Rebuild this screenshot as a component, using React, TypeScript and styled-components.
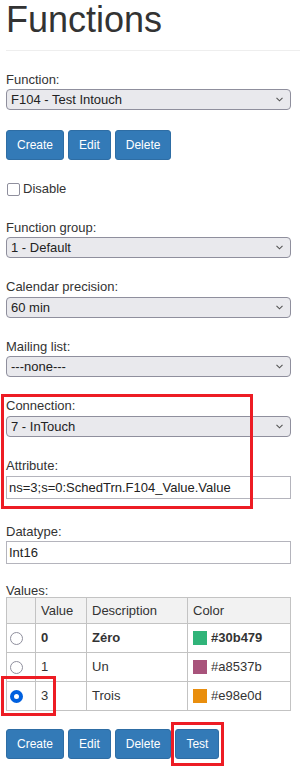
import React from 'react'
import styled, { createGlobalStyle } from 'styled-components'

const GlobalStyle = createGlobalStyle`
  html, body {
    margin: 0;
    padding: 0;
    background: #fff;
  }
  body {
    font-family: 'Liberation Sans', Arial, Helvetica, sans-serif;
    font-size: 13px;
    line-height: 1.42857;
    color: #333;
  }
`

const Page = styled.div`
  position: relative;
  width: 300px;
  box-sizing: border-box;
  padding: 0 9px 0 6px;
`
const PageHeader = styled.div`
  margin: 0 -9px 20px 0;
  padding-bottom: 10px;
  border-bottom: 1px solid #eee;
`
const Title = styled.h1`
  margin: 0;
  font-size: 36px;
  font-weight: normal;
  line-height: 1.1;
  color: #333;
`
const FormGroup = styled.div`
  margin-bottom: 20px;
`
const Label = styled.label`
  display: block;
  font-weight: normal;
`
const ValuesLabel = styled.label`
  display: block;
  margin-top: 3px;
  line-height: 13px;
`
const SelectWrap = styled.div`
  position: relative;
`
const Select = styled.select`
  display: block;
  width: 100%;
  height: 21px;
  box-sizing: border-box;
  appearance: none;
  margin: 0;
  padding: 1px 20px 1px 4px;
  font-family: inherit;
  font-size: 13px;
  color: #222;
  background: #e9e9ed;
  border: 1px solid #8f8f9d;
  border-radius: 4px;
`
const Chevron = styled.svg`
  position: absolute;
  right: 8px;
  top: 8px;
  width: 7px;
  height: 5px;
  pointer-events: none;
`
const TextInput = styled.input`
  display: block;
  width: 100%;
  height: 23px;
  box-sizing: border-box;
  margin: 0;
  padding: 2px 2px;
  font-family: inherit;
  font-size: 13px;
  color: #222;
  background: #fff;
  border: 1px solid #b4b4bc;
  border-radius: 0;
`
const ButtonRow = styled.div`
  display: flex;
  gap: 4px;
  margin-bottom: 20px;
`
const Button = styled.button<{ $marked?: boolean }>`
  position: relative;
  height: 30px;
  padding: 5px 10px;
  font-family: inherit;
  font-size: 12px;
  line-height: 1.5;
  color: #fff;
  background: #337ab7;
  border: 1px solid #2e6da4;
  border-radius: 3px;
  cursor: pointer;

  ${({ $marked }) =>
    $marked &&
    `
    &::after {
      content: '';
      position: absolute;
      top: -8px;
      bottom: -8px;
      left: -5px;
      right: -6px;
      border: 3px solid #ed1c24;
    }
  `}
`
const CheckRow = styled.label`
  display: flex;
  align-items: center;
  gap: 3px;
  margin-bottom: 20px;
`
const CheckBox = styled.span`
  width: 13px;
  height: 13px;
  box-sizing: border-box;
  margin-left: 1px;
  border: 1px solid #8f8f9d;
  border-radius: 2px;
  background: #fff;
`
const Highlight = styled.div`
  position: relative;
  margin-bottom: 24px;

  & > ${FormGroup}:last-child {
    margin-bottom: 0;
  }

  &::after {
    content: '';
    position: absolute;
    top: -3px;
    left: -5px;
    width: 246px;
    bottom: -10px;
    border: 3px solid #ed1c24;
    pointer-events: none;
  }
`
const Table = styled.table`
  width: 100%;
  border-collapse: collapse;
  margin-bottom: 18px;

  th,
  td {
    padding: 5px;
    line-height: 18px;
    border: 1px solid #c3c3c3;
    text-align: left;
    font-weight: normal;
    vertical-align: middle;
  }
  th {
    line-height: 15px;
    background: #f2f2f2;
  }
`
const RadioCell = styled.td<{ $marked?: boolean }>`
  position: relative;

  ${({ $marked }) =>
    $marked &&
    `
    &::after {
      content: '';
      position: absolute;
      top: -6px;
      left: -6px;
      width: 49px;
      height: 34px;
      border: 3px solid #ed1c24;
      z-index: 1;
    }
  `}
`
const Radio = styled.span<{ $checked?: boolean }>`
  display: block;
  width: 13px;
  height: 13px;
  box-sizing: border-box;
  margin-left: -2px;
  border-radius: 50%;
  background: #fff;
  border: ${({ $checked }) => ($checked ? '4px solid #0060df' : '1px solid #8f8f9d')};
`
const Cell = styled.td<{ $bold?: boolean }>`
  font-weight: ${({ $bold }) => ($bold ? 'bold' : 'normal')} !important;
`
const ColorCell = styled.span`
  display: flex;
  align-items: center;
  gap: 4px;
`
const Swatch = styled.span<{ $color: string }>`
  width: 14px;
  height: 14px;
  background: ${({ $color }) => $color};
`

const SelectField = ({ label, value }: { label: string; value: string }) => (
  <FormGroup>
    <Label>{label}</Label>
    <SelectWrap>
      <Select defaultValue={value}>
        <option>{value}</option>
      </Select>
      <Chevron viewBox="0 0 7 5">
        <path d="M0.5 0.8 L3.5 3.8 L6.5 0.8" fill="none" stroke="#555" strokeWidth="1.1" />
      </Chevron>
    </SelectWrap>
  </FormGroup>
)

const InputField = ({ label, value }: { label: string; value: string }) => (
  <FormGroup>
    <Label>{label}</Label>
    <TextInput defaultValue={value} />
  </FormGroup>
)

const values = [
  { radio: false, value: '0', desc: 'Zéro', color: '#30b479', bold: true },
  { radio: false, value: '1', desc: 'Un', color: '#a8537b', bold: false },
  { radio: true, value: '3', desc: 'Trois', color: '#e98e0d', bold: false },
]

const App = (): JSX.Element => (
  <>
    <GlobalStyle />
    <Page>
      <PageHeader>
        <Title>Functions</Title>
      </PageHeader>

      <SelectField label="Function:" value="F104 - Test Intouch" />

      <ButtonRow>
        <Button>Create</Button>
        <Button>Edit</Button>
        <Button>Delete</Button>
      </ButtonRow>

      <CheckRow>
        <CheckBox />
        Disable
      </CheckRow>

      <SelectField label="Function group:" value="1 - Default" />
      <SelectField label="Calendar precision:" value="60 min" />
      <SelectField label="Mailing list:" value="---none---" />

      <Highlight>
        <SelectField label="Connection:" value="7 - InTouch" />
        <InputField label="Attribute:" value="ns=3;s=0:SchedTrn.F104_Value.Value" />
      </Highlight>

      <InputField label="Datatype:" value="Int16" />

      <ValuesLabel>Values:</ValuesLabel>
      <Table>
        <thead>
          <tr>
            <th style={{ width: 18 }}></th>
            <th style={{ width: 40 }}>Value</th>
            <th style={{ width: 90 }}>Description</th>
            <th>Color</th>
          </tr>
        </thead>
        <tbody>
          {values.map(row => (
            <tr key={row.value}>
              <RadioCell $marked={row.radio}>
                <Radio $checked={row.radio} />
              </RadioCell>
              <Cell $bold={row.bold}>{row.value}</Cell>
              <Cell $bold={row.bold}>{row.desc}</Cell>
              <Cell $bold={row.bold}>
                <ColorCell>
                  <Swatch $color={row.color} />
                  {row.color}
                </ColorCell>
              </Cell>
            </tr>
          ))}
        </tbody>
      </Table>

      <ButtonRow>
        <Button>Create</Button>
        <Button>Edit</Button>
        <Button>Delete</Button>
        <Button $marked>Test</Button>
      </ButtonRow>
    </Page>
  </>
)

export default App
